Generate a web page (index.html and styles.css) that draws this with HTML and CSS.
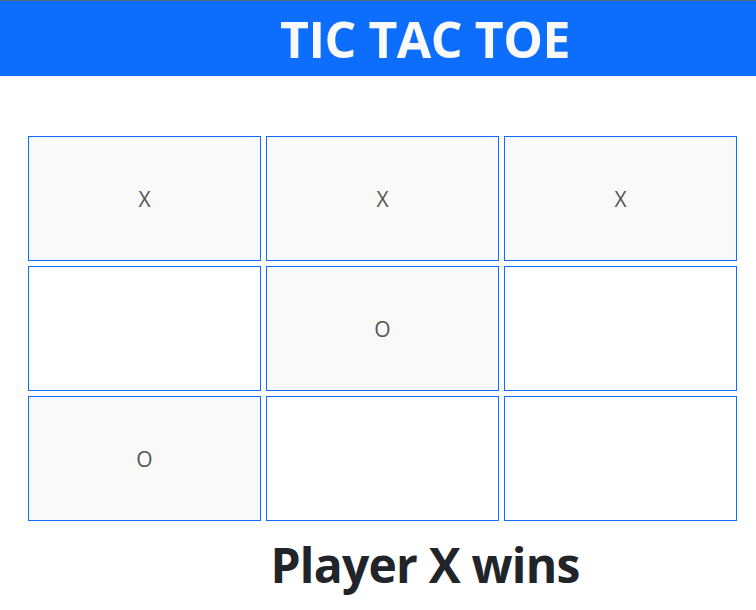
FILE: index.html
```html
<!DOCTYPE html>
<html lang="en">
<head>
    <meta charset="UTF-8">
    <meta name="viewport" content="width=device-width, initial-scale=1.0">
    <title>Tic Tac Toe</title>
    <link rel="stylesheet" href="styles.css">
</head>
<body>
    <header class="top-bar">
        <h1 class="title">TIC TAC TOE</h1>
    </header>

    <main class="game">
        <div class="board">
            <div class="cell filled">X</div>
            <div class="cell filled">X</div>
            <div class="cell filled">X</div>
            <div class="cell"></div>
            <div class="cell filled">O</div>
            <div class="cell"></div>
            <div class="cell filled">O</div>
            <div class="cell"></div>
            <div class="cell"></div>
        </div>

        <h2 class="status">Player X wins</h2>
    </main>
</body>
</html>
```

FILE: styles.css
```css
* {
    margin: 0;
    padding: 0;
    box-sizing: border-box;
    font-family: 'Open Sans', 'Noto Sans', sans-serif;
}

body {
    background-color: #ffffff;
    border-top: 1px solid #5c6670;
}

.top-bar {
    background-color: #0d6efd;
    height: 75px;
    display: flex;
    align-items: center;
    justify-content: center;
    padding-left: 94px;
}

.title {
    color: #f8f9fa;
    font-size: 50px;
    font-weight: 700;
    letter-spacing: -0.5px;
}

.game {
    padding-top: 60px;
}

.board {
    display: grid;
    grid-template-columns: repeat(3, 233px);
    grid-auto-rows: 125px;
    gap: 5px;
    margin-left: 28px;
}

.cell {
    border: 1px solid #0d6efd;
    background-color: #ffffff;
    display: flex;
    align-items: center;
    justify-content: center;
    color: #555555;
    font-size: 21px;
    font-weight: 400;
}

.cell.filled {
    background-color: #f9f9f9;
}

.status {
    color: #212529;
    text-align: center;
    padding-left: 94px;
    font-size: 48px;
    font-weight: 700;
    margin-top: 11px;
    letter-spacing: -0.8px;
}
```
